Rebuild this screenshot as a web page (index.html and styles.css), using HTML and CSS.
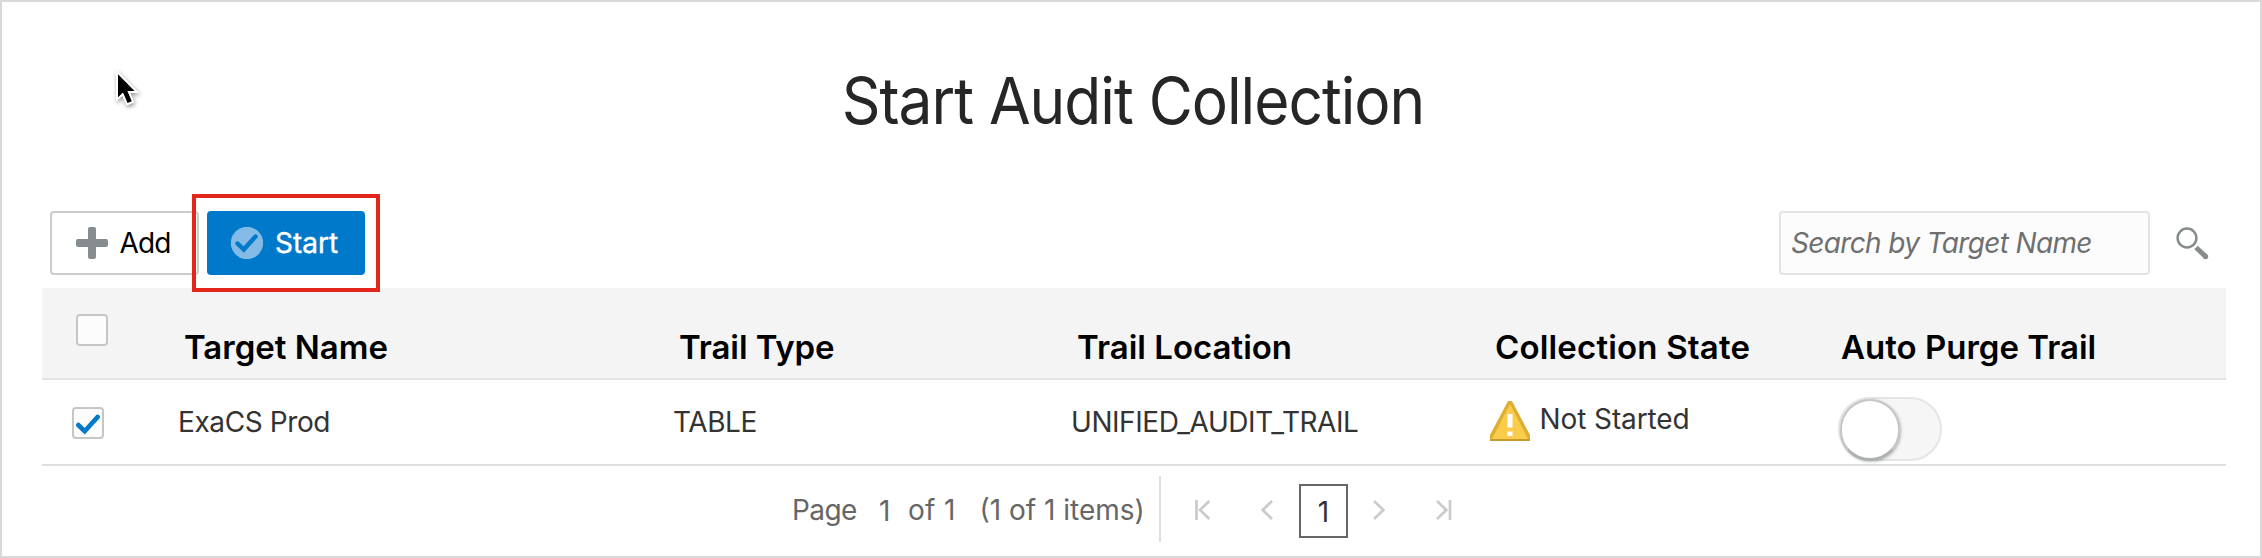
FILE: index.html
```html
<!DOCTYPE html>
<html lang="en">
<head>
<meta charset="utf-8">
<title>Start Audit Collection</title>
<link rel="stylesheet" href="styles.css">
</head>
<body>
<main class="page">
  <h1 class="title">Start Audit Collection</h1>
  <div class="toolbar">
    <button class="btn btn-add" type="button">
      <svg class="icon" width="32" height="32" viewBox="0 0 32 32"><path d="M14 0h4q2 0 2 2v10h10q2 0 2 2v4q0 2-2 2H20v10q0 2-2 2h-4q-2 0-2-2V20H2q-2 0-2-2v-4q0-2 2-2h10V2q0-2 2-2z" fill="#868c8f"/></svg>
      <span class="label-add">Add</span>
    </button>
    <button class="btn btn-start" type="button">
      <svg class="icon" width="32" height="32" viewBox="0 0 32 32"><circle cx="16" cy="16" r="16.2" fill="#84bbe6"/><path d="M6.5 16.5l6.3 6L24.5 9.5" fill="none" stroke="#0179cb" stroke-width="4.4" stroke-linecap="round"/></svg>
      <span>Start</span>
      <i class="callout"></i>
    </button>
    <div class="search">
      <div class="search-field"><span>Search by Target Name</span></div>
      <svg class="search-icon" width="34" height="34" viewBox="0 0 34 34"><circle cx="11" cy="11" r="9.4" fill="none" stroke="#868c8c" stroke-width="2.5"/><path d="M20 20.5l9.5 8.8" stroke="#868c8c" stroke-width="5" stroke-linecap="butt"/><circle cx="29.5" cy="29.5" r="2.7" fill="#868c8c"/></svg>
    </div>
  </div>
  <section class="table">
    <div class="row head">
      <div class="cell-check"><i class="checkbox"></i></div>
      <div class="th">Target Name</div>
      <div class="th th-type">Trail Type</div>
      <div class="th">Trail Location</div>
      <div class="th th-state">Collection State</div>
      <div class="th th-purge">Auto Purge Trail</div>
    </div>
    <div class="row body">
      <div class="cell-check"><i class="checkbox"><svg width="28" height="28" viewBox="0 0 28 28"><path d="M4.3 16l6.4 6.2L23.7 7.9" fill="none" stroke="#0179cb" stroke-width="4.6" stroke-linecap="round"/></svg></i></div>
      <div class="td td-name">ExaCS Prod</div>
      <div class="td td-type">TABLE</div>
      <div class="td td-location">UNIFIED_AUDIT_TRAIL</div>
      <div class="td td-state">
        <svg width="40" height="40" viewBox="0 0 40 40"><path d="M18 0h4L40 34v6H0v-6z" fill="#dcae33"/><path d="M20 3L38 38H2z" fill="#fbcb4a"/><path d="M0 38h40v2H0z" fill="#c59b2c"/><path d="M17.5 13h5v13.5h-5zM17.5 30.5h5v4.5h-5z" fill="#fff"/></svg>
        <span>Not Started</span>
      </div>
      <div class="td td-purge"><div class="toggle"><i class="knob"></i></div></div>
    </div>
  </section>
  <nav class="pager">
    <span class="pg-label">Page</span>
    <span class="pg-num">1</span>
    <span class="pg-of">of 1</span>
    <span class="pg-items">(1 of 1 items)</span>
    <i class="divider"></i>
    <svg class="first" width="16" height="20" viewBox="0 0 16 20"><path d="M1.5 0v20M14.3 1L5 10l9.3 9"/></svg>
    <svg class="prev" width="12" height="20" viewBox="0 0 12 20"><path d="M11 1L1.7 10l9.3 9"/></svg>
    <span class="current">1</span>
    <svg class="next" width="12" height="20" viewBox="0 0 12 20"><path d="M1 1l9.3 9L1 19"/></svg>
    <svg class="last" width="16" height="20" viewBox="0 0 16 20"><path d="M14 0v20M1 1l9.3 9L1 19"/></svg>
  </nav>
  <svg class="cursor" width="34" height="44" viewBox="0 0 34 44"><path d="M7 5.2v23l5-4.6 4.6 10.4 4.2-1.7-4.4-10.3h7.2z" fill="#000" stroke="#fff" stroke-width="4" paint-order="stroke"/></svg>
</main>
</body>
</html>
```

FILE: styles.css
```css
* { box-sizing: border-box; }
body { margin: 0; background: #fff; font-family: Inter, "Liberation Sans", sans-serif; font-size: 28px; color: #333; }
.page { position: relative; width: 2262px; height: 558px; border: 2px solid #d9d9d9; display: flex; flex-direction: column; }
svg { display: block; flex: none; }

.title { margin: 59px 0 0 4px; height: 80px; line-height: 80px; text-align: center; font-size: 65px; font-weight: 400; letter-spacing: -1.1px; color: #262626; transform: scaleX(.93); white-space: nowrap; }

.toolbar { display: flex; align-items: flex-start; margin-top: 70px; padding: 0 50px 0 48px; height: 77px; }
.btn { position: relative; display: flex; align-items: center; height: 64px; border-radius: 4px; font: 400 28px Inter, sans-serif; padding: 0; white-space: nowrap; }
.btn span { line-height: 64px; }
.btn-add { width: 149px; border: 2px solid #ccc; background: #fff; color: #000; padding-left: 24px; gap: 11.5px; }
.label-add { letter-spacing: -.8px; }
.btn-start { width: 158px; margin-left: 8px; border: 0; background: #0179cb; color: #fff; padding-left: 24px; gap: 12px; -webkit-text-stroke: .4px #fff; }
.callout { position: absolute; left: -15px; top: -17px; width: 188px; height: 98px; border: 4px solid #e4261a; }
.search { display: flex; margin-left: auto; }
.search-field { width: 371px; height: 64px; border: 2px solid #e4e4e4; border-radius: 4px; background: #fcfcfc; padding-left: 10px; line-height: 61px; font-style: italic; letter-spacing: -.65px; color: #6f6f6f; white-space: nowrap; }
.search-icon { margin: 16px 0 0 26px; }

.table { margin: 0 34px 0 40px; }
.row { display: grid; grid-template-columns: 130px 495px 398px 419px 348px 1fr; white-space: nowrap; }
.head { height: 92px; background: #f4f4f4; border-bottom: 2px solid #e2e2e2; }
.body { height: 86px; border-bottom: 2px solid #dfdfdf; }
.cell-check { padding: 26px 0 0 34px; }
.body .cell-check { padding: 27px 0 0 30px; }
.checkbox { display: block; width: 32px; height: 32px; border: 2px solid #c6c6c6; border-radius: 4px; background: #fcfcfc; }
.th { padding: 39px 0 0 12px; font-size: 33px; font-weight: 600; line-height: 40px; color: #000; }
.th-type { letter-spacing: -.1px; }
.th-state { padding-left: 11px; letter-spacing: .17px; }
.th-purge { padding-left: 9px; }
.td { padding: 22px 0 0 6px; line-height: 40px; }
.td-name { letter-spacing: -.4px; }
.td-type { letter-spacing: -.42px; }
.td-location { letter-spacing: -.45px; }
.td-state { display: flex; padding-top: 21px; gap: 9.5px; letter-spacing: -.1px; }
.td-state span { line-height: 36px; }
.td-purge { padding-top: 17px; }
.toggle { width: 104px; height: 64px; border: 2px solid #e4e6e6; border-radius: 32px; background: #f6f6f6; padding: 0; }
.knob { display: block; width: 60px; height: 62px; border: 2px solid #c4c7c8; border-bottom: 3px solid #aeb1b2; border-radius: 31px; background: #fff; box-shadow: 1px 1px 3px rgba(0,0,0,.25); }

.pager { display: flex; align-items: flex-start; height: 90px; padding: 10px 0 0 790px; color: #666; line-height: 68px; white-space: nowrap; }
.pg-label { width: 87px; letter-spacing: -.6px; }
.pg-num { width: 29px; padding-top: 1px; }
.pg-of { width: 71.5px; letter-spacing: .3px; }
.pg-items { width: 179.5px; }
.divider { width: 2px; height: 66px; background: #e0e0e0; }
.pager svg { margin-top: 24px; fill: none; stroke: #c9cbcc; stroke-width: 2.7; }
.pager .first { margin-left: 34px; }
.pager .prev { margin-left: 50px; }
.current { width: 49px; height: 54px; margin: 8px 0 0 26px; border: 2px solid #666; color: #333; text-align: center; line-height: 53px; }
.pager .next { margin-left: 25px; }
.pager .last { margin-left: 51px; }

.cursor { position: absolute; left: 109px; top: 67px; filter: drop-shadow(1px 2px 2px rgba(0,0,0,.4)); }
```
